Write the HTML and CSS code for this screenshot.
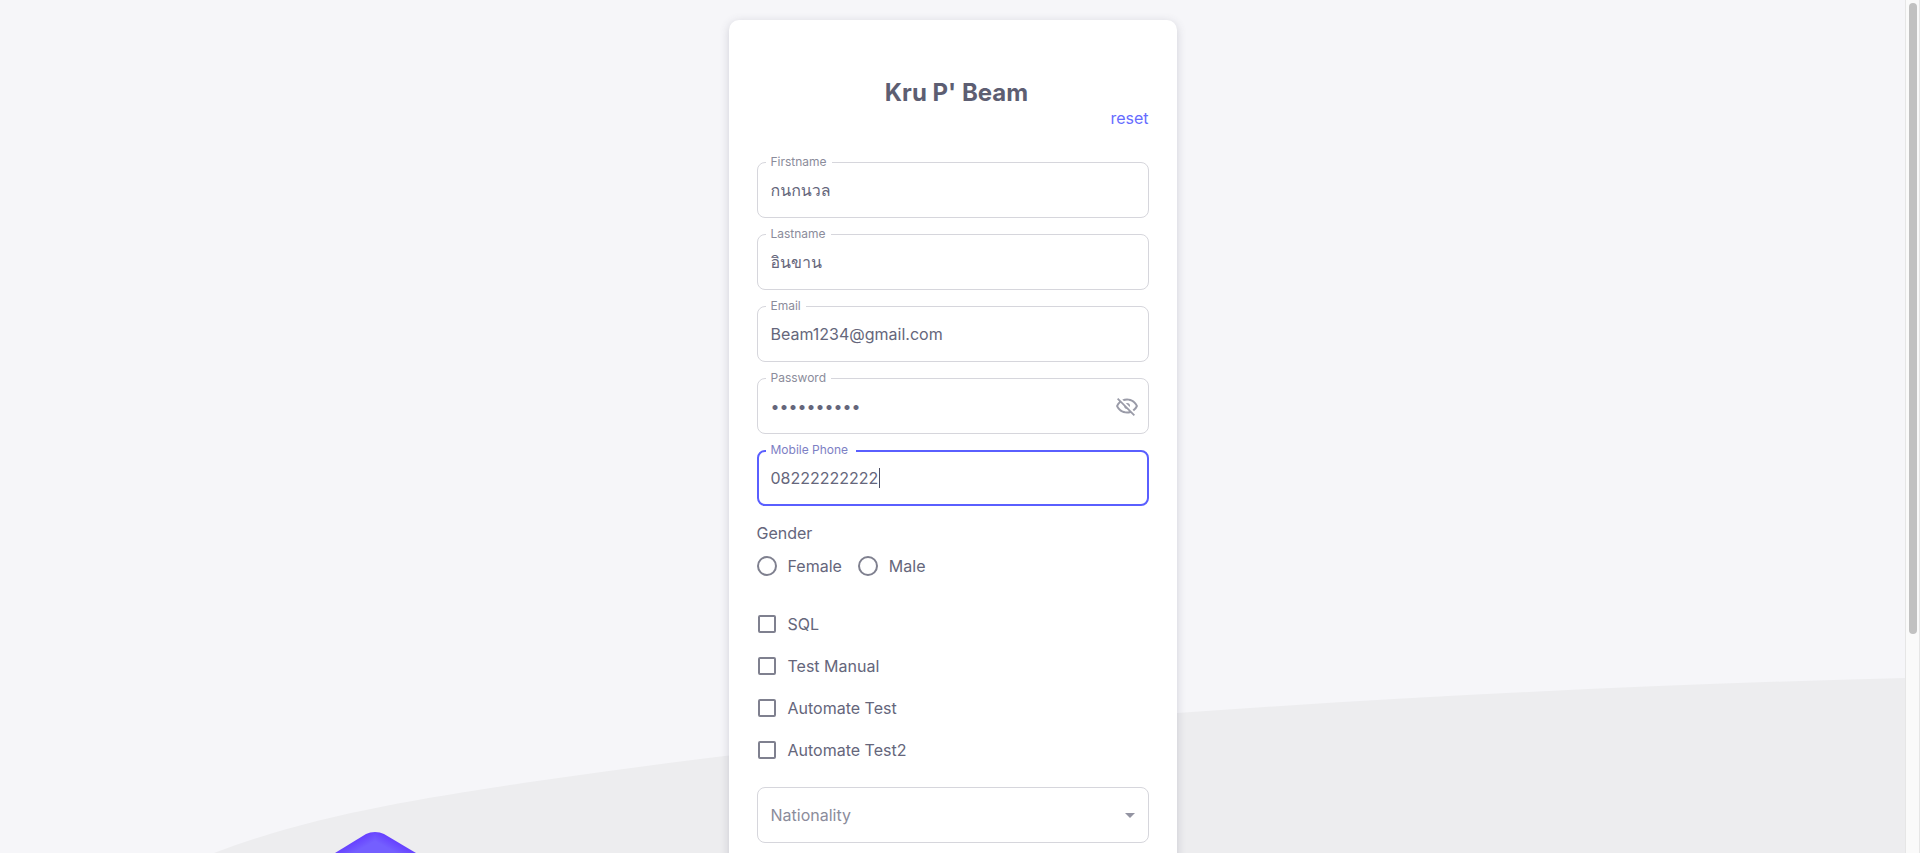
FILE: index.html
```html
<!DOCTYPE html>
<html lang="en">
<head>
  <meta charset="utf-8">
  <title>Kru P' Beam</title>
  <link rel="stylesheet" href="styles.css">
</head>
<body>
  <main class="page">
    <svg class="hill" viewBox="0 0 1905 175" preserveAspectRatio="none" aria-hidden="true">
      <path d="M214 175C317 136 420 121 523 105C741 73 959 50 1177 35C1420 18 1662 6 1905 0V175Z"/>
    </svg>
    <svg class="cube" viewBox="0 0 84 22" aria-hidden="true">
      <defs>
        <linearGradient id="edge-left" gradientUnits="userSpaceOnUse" x1="20" y1="10" x2="25" y2="19">
          <stop offset="0" stop-color="#6640ff"/><stop offset="1" stop-color="#745fff"/>
        </linearGradient>
        <linearGradient id="edge-right" gradientUnits="userSpaceOnUse" x1="62" y1="10" x2="57" y2="19">
          <stop offset="0" stop-color="#6640ff"/><stop offset="1" stop-color="#745fff"/>
        </linearGradient>
      </defs>
      <path fill="url(#edge-left)" d="M1 22L32 3Q36 1 41 1V22Z"/>
      <path fill="url(#edge-right)" d="M82 22L50 3Q46 1 41 1V22Z"/>
    </svg>

    <form class="card">
      <h1 class="title">Kru P' Beam</h1>
      <a class="reset" href="#">reset</a>

      <div class="fields">
        <div class="field">
          <label class="field-label" for="firstname">Firstname</label>
          <input class="field-input" id="firstname" type="text" value="กนกนวล">
        </div>
        <div class="field">
          <label class="field-label" for="lastname">Lastname</label>
          <input class="field-input" id="lastname" type="text" value="อินขาน">
        </div>
        <div class="field">
          <label class="field-label" for="email">Email</label>
          <input class="field-input" id="email" type="email" value="Beam1234@gmail.com">
        </div>
        <div class="field">
          <label class="field-label" for="password">Password</label>
          <input class="field-input" id="password" type="password" value="1234567890">
          <button class="eye" type="button" aria-label="Show password">
            <svg viewBox="0 0 24 24" width="24" height="24" fill="currentColor"><path d="M2,5.27L3.28,4L20,20.72L18.73,22L15.65,18.92C14.5,19.3 13.28,19.5 12,19.5C7,19.5 2.73,16.39 1,12C1.69,10.24 2.79,8.69 4.19,7.46L2,5.27M12,9A3,3 0 0,1 15,12C15,12.35 14.94,12.69 14.83,13L11,9.17C11.31,9.06 11.65,9 12,9M12,4.5C17,4.5 21.27,7.61 23,12C22.18,14.08 20.79,15.88 19,17.19L17.58,15.76C18.94,14.82 20.06,13.54 20.82,12C19.17,8.64 15.76,6.5 12,6.5C10.91,6.5 9.84,6.68 8.84,7L7.3,5.47C8.74,4.85 10.33,4.5 12,4.5M3.18,12C4.83,15.36 8.24,17.5 12,17.5C12.69,17.5 13.37,17.43 14,17.29L11.72,15C10.29,14.85 9.15,13.71 9,12.28L5.6,8.87C4.61,9.72 3.78,10.78 3.18,12Z"/></svg>
          </button>
        </div>
        <div class="field field-active">
          <label class="field-label" for="phone">Mobile Phone</label>
          <input class="field-input" id="phone" type="tel" value="08222222222">
          <span class="caret"></span>
        </div>
      </div>

      <fieldset class="gender">
        <legend class="legend">Gender</legend>
        <div class="radios">
          <label class="choice"><input class="radio" type="radio" name="gender">Female</label>
          <label class="choice"><input class="radio" type="radio" name="gender">Male</label>
        </div>
      </fieldset>

      <div class="checks">
        <label class="choice"><input class="check" type="checkbox">SQL</label>
        <label class="choice"><input class="check" type="checkbox">Test Manual</label>
        <label class="choice"><input class="check" type="checkbox">Automate Test</label>
        <label class="choice"><input class="check" type="checkbox">Automate Test2</label>
      </div>

      <div class="field">
        <select class="field-input field-select" aria-label="Nationality">
          <option>Nationality</option>
        </select>
        <svg class="arrow" viewBox="0 0 24 24" width="24" height="24" aria-hidden="true"><path d="M7 10l5 5 5-5z"/></svg>
      </div>
    </form>
  </main>
  <div class="scrollbar"><div class="thumb"></div></div>
</body>
</html>
```
FILE: styles.css
```css
* {
  box-sizing: border-box;
}

body {
  margin: 0;
  display: flex;
  height: 100vh;
  overflow: hidden;
  background: #f6f6f9;
  color: #65667b;
  font: 16px/24px Inter, Loma, Waree, Garuda, "Noto Serif Thai", "Noto Sans Thai Looped", serif;
}

.page {
  position: relative;
  flex: 1;
  overflow: hidden;
  padding: 20px;
}

.hill {
  position: absolute;
  left: 0;
  bottom: 0;
  width: 100%;
  height: 175px;
  fill: #ededef;
}

.cube {
  position: absolute;
  left: 334px;
  bottom: 0;
  width: 84px;
  height: 22px;
}

.card {
  position: relative;
  display: flex;
  flex-direction: column;
  max-width: 448px;
  min-height: 100vh;
  margin: 0 auto;
  padding: 60px 28px;
  border-radius: 10px;
  background: #fff;
  box-shadow: 0 2px 10px rgba(76, 78, 100, 0.22);
}

.title {
  margin: 0;
  padding-left: 8px;
  font-size: 24px;
  font-weight: 700;
  line-height: 26px;
  text-align: center;
  color: #5d5e72;
}

.reset {
  align-self: flex-end;
  margin-bottom: 32px;
  color: #666cff;
  text-decoration: none;
}

.fields {
  display: grid;
  gap: 16px;
}

.field {
  position: relative;
  display: flex;
  align-items: center;
  height: 56px;
  border: 1px solid #d6d6dc;
  border-radius: 8px;
}

.field-active {
  border: 2px solid #5a5fff;
}

.field-label {
  position: absolute;
  top: -9px;
  left: 8px;
  padding: 0 5px;
  background: #fff;
  color: #8b8c9b;
  font-size: 12px;
  line-height: 16px;
}

.field-active .field-label {
  top: -10px;
  left: 7px;
  padding-right: 8px;
  color: #7d80c4;
}

.field-input {
  flex: 1;
  min-width: 0;
  height: 100%;
  padding: 0 13px;
  border: 0;
  outline: 0;
  background: transparent;
  color: inherit;
  font: inherit;
}

.field-active .field-input {
  padding: 0 12px;
}

.field-select {
  appearance: none;
  color: #8b8c9b;
}

.eye {
  display: flex;
  margin-right: 9px;
  padding: 0;
  border: 0;
  background: none;
  color: #9a9ba8;
}

.caret {
  position: absolute;
  left: 120px;
  top: 16px;
  width: 1px;
  height: 20px;
  background: #4c4e64;
}

.arrow {
  position: absolute;
  right: 6px;
  fill: #9394a2;
  pointer-events: none;
}

.gender {
  margin: 15px 0 0;
  padding: 0;
  border: 0;
}

.legend {
  padding: 0;
}

.radios {
  display: flex;
  gap: 16px;
  padding-top: 9px;
}

.choice {
  display: flex;
  align-items: center;
  gap: 11px;
}

.radio,
.check {
  appearance: none;
  margin: 0;
  border: 2px solid #7f808f;
}

.radio {
  width: 20px;
  height: 20px;
  border-radius: 50%;
}

.check {
  width: 18px;
  height: 18px;
  margin: 0 1px;
  border-radius: 2px;
}

.checks {
  display: grid;
  gap: 18px;
  padding: 34px 0 25px;
}

.scrollbar {
  width: 15px;
  padding: 3px 2px 3px 3px;
  border: solid #e6e6e6;
  border-width: 0 1px;
  background: #fafafa;
}

.thumb {
  width: 8px;
  height: 74.5%;
  border-radius: 4px;
  background: #c1c1c1;
}
```
